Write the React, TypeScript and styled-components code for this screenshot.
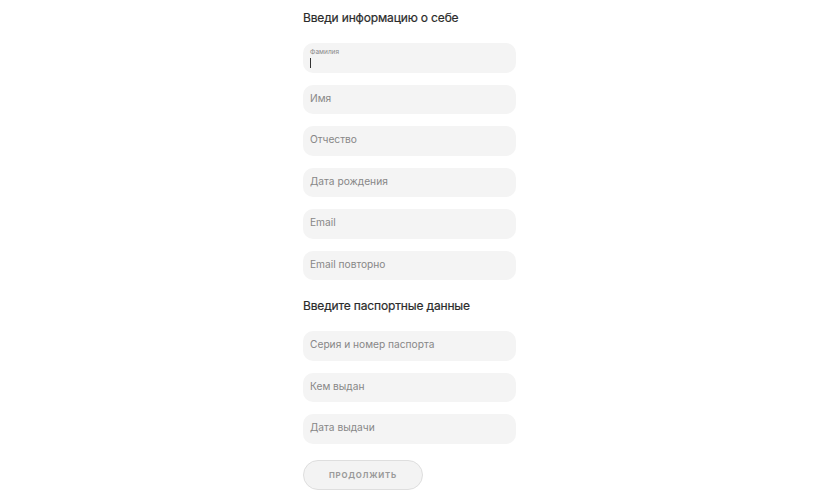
import React from "react";
import styled, { createGlobalStyle } from "styled-components";

const Global = createGlobalStyle`
  html, body { margin: 0; padding: 0; background: #ffffff; }
  body { font-family: "Inter", "Noto Sans", sans-serif; }
  * { box-sizing: border-box; }
`;

const Page = styled.div`
  display: flex;
  justify-content: center;
  padding-right: 6px;
  min-height: 500px;
`;

const Column = styled.form`
  width: 213px;
  display: flex;
  flex-direction: column;
  padding-top: 8px;
`;

const Heading = styled.h2<{ $first?: boolean }>`
  margin: ${(p) => (p.$first ? "0" : "16px")} 0 15px 0;
  font-size: 12px;
  line-height: 20px;
  font-weight: 400;
  letter-spacing: -0.15px;
  color: #2b2b2b;
  -webkit-text-stroke: 0.2px #2b2b2b;
`;

const Fields = styled.div`
  display: flex;
  flex-direction: column;
  gap: 12px;
`;

const Field = styled.input`
  width: 100%;
  height: 29.5px;
  border: none;
  outline: none;
  border-radius: 10px;
  background: #f4f4f4;
  padding: 0 7px 3px;
  font-family: inherit;
  font-size: 10.2px;
  color: #333;
  &::placeholder { color: #878787; }
`;

const ActiveField = styled.div`
  height: 29.5px;
  border-radius: 10px;
  background: #f4f4f4;
  padding: 5px 7px 0;
  display: flex;
  flex-direction: column;
`;

const TinyLabel = styled.span`
  font-size: 6.5px;
  line-height: 8px;
  color: #8a8a8a;
`;

const Caret = styled.span`
  margin-top: 2px;
  width: 1px;
  height: 10px;
  background: #333;
`;

const Button = styled.button`
  margin-top: 16.5px;
  width: 120px;
  height: 30px;
  border-radius: 15px;
  border: 1px solid #dedede;
  background: #f3f3f3;
  font-family: inherit;
  font-size: 7.8px;
  font-weight: 700;
  letter-spacing: 0.8px;
  color: #9a9a9a;
  text-transform: uppercase;
  padding: 0 0 1px;
  cursor: pointer;
`;

export default function App() {
  return (
    <>
      <Global />
      <Page>
        <Column onSubmit={(e) => e.preventDefault()}>
          <Heading $first>Введи информацию о себе</Heading>
          <Fields>
            <ActiveField>
              <TinyLabel>Фамилия</TinyLabel>
              <Caret />
            </ActiveField>
            <Field placeholder="Имя" />
            <Field placeholder="Отчество" />
            <Field placeholder="Дата рождения" />
            <Field placeholder="Email" />
            <Field placeholder="Email повторно" />
          </Fields>
          <Heading>Введите паспортные данные</Heading>
          <Fields>
            <Field placeholder="Серия и номер паспорта" />
            <Field placeholder="Кем выдан" />
            <Field placeholder="Дата выдачи" />
          </Fields>
          <Button type="button">Продолжить</Button>
        </Column>
      </Page>
    </>
  );
}
